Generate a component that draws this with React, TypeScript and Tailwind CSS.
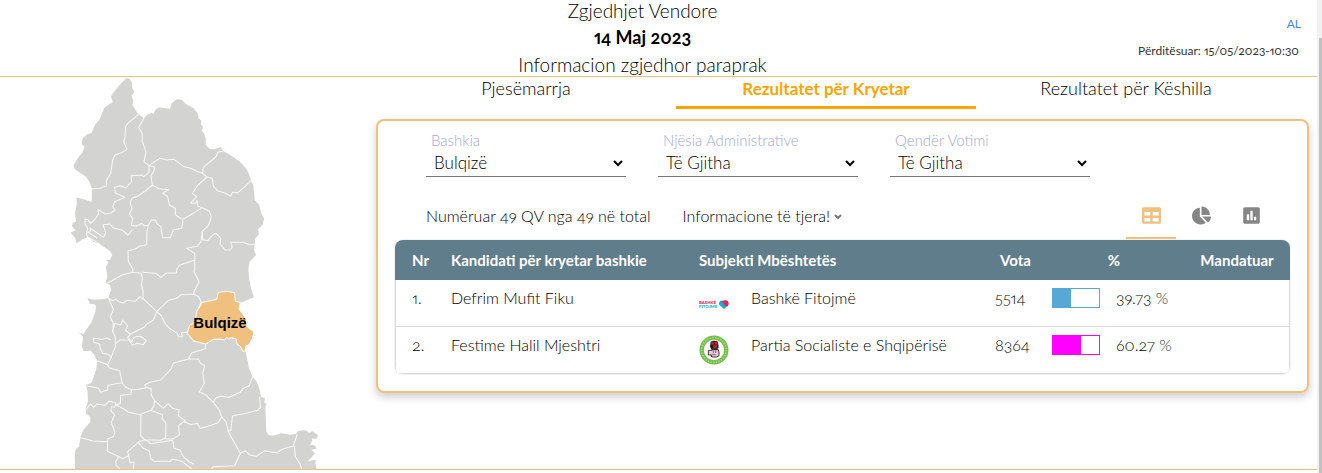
import React, { useState } from "react";
import { FaTable, FaChartPie, FaPoll } from "react-icons/fa";

const outline =
  "M200 24L209 27L215 36L217 55L223 66L214 78L220 92L217 105L225 118L235 132L252 144L262 134L274 129L281 131L286 119L298 112L315 115L330 117L335 100L350 88L365 89L378 102L400 114L412 128L416 145L424 152L422 163L430 170L424 182L432 190L437 205L437 224L448 236L459 238L468 236L482 232L490 243L515 258L540 275L560 298L568 315L573 332L580 345L583 375L584 390L598 405L602 425L612 447L608 465L594 478L597 493L586 505L584 523L582 540L588 555L568 577L565 600L568 630L573 655L582 682L540 699L537 718L560 748L563 770L582 785L575 810L555 830L556 843L562 870L567 895L578 920L590 935L598 955L603 980L615 985L613 998L620 1002L616 1010L619 1085L626 1095L640 1097L664 1090L690 1094L708 1092L715 1083L735 1080L748 1088L757 1083L775 1097L768 1107L755 1105L757 1113L750 1125L765 1126L770 1136L754 1139L765 1150L753 1164L741 1176L762 1169L768 1172L766 1181L770 1197H45L44 1150L48 1137L57 1130L62 1100L70 1080L91 1055L91 1042L78 1030L77 1014L84 995L82 960L78 945L95 938L108 900L112 875L103 855L93 842L70 843L66 830L69 800L55 787L70 793L80 778L95 755L106 725L108 707L102 702L90 702L82 684L100 689L125 688L145 685L153 660L150 645L137 638L142 620L138 590L145 577L138 571L150 570L157 555L148 541L137 535L120 522L100 515L85 500L68 508L50 520L45 503L32 488L47 480L36 470L38 458L48 455L45 430L50 405L50 382L95 395L96 357L88 335L78 320L62 310L45 298L40 288L55 262L66 250L74 230L65 222L68 205L82 193L95 188L105 165L120 146L133 113L158 96L153 78L168 58L185 38Z";

const borders = [
  "M235 132L226 142L205 158L197 170L195 202L191 216L201 238L185 248L165 255L158 270L152 310L140 330L139 348L120 355L96 357",
  "M252 144L236 172L246 190L247 215L258 245L252 275L267 287L284 275L300 265L320 270L342 268L372 290L390 294L410 304L428 310L441 321L413 346L397 371L410 380L391 400L407 400L411 391L413 408L427 413",
  "M490 243L474 247L467 261L446 279L430 292L428 310",
  "M441 321L457 325L460 348L472 362L495 369L512 379L518 366L532 369L555 350L573 332",
  "M267 287L267 307L251 320L245 315L214 317L214 336L197 354L181 347L164 352L166 369L195 382L164 395L158 410L165 420L153 429L135 432L114 419L116 432L103 450L92 460L83 449L75 447L75 462L83 474L79 491L92 482L90 474L131 502L137 488L129 464L149 462L160 474L186 480L204 495L217 479",
  "M267 287L283 290L283 300L273 318L277 345L297 356L326 359L308 369L323 380L328 405L346 415L347 435L365 447",
  "M277 345L260 360L236 377L216 385L210 400L216 416L208 431L218 446L214 466L229 469L245 460L253 468L265 466L274 450L287 450L290 460L302 469L308 503L331 503L340 480L365 474L369 448L400 430L427 413L448 424L454 440L446 466L427 485L423 515L412 529L380 535L404 550L405 570L358 586L350 600L349 609L319 609L303 622L288 610L247 607",
  "M427 485L428 509L443 512L458 495L468 490L482 505L480 522L496 540L510 540L517 531L512 517L550 517L568 524L584 523",
  "M265 466L261 485L260 524L238 529L225 537L204 543L205 575L218 596L218 607L186 615L165 627L142 640",
  "M79 491L83 501L106 514L119 523M83 486L112 504",
  "M404 570L404 600L402 605L417 635L402 665L402 673L416 680L424 697L411 722L408 755L382 785L400 812L437 822L436 836L395 849L385 867",
  "M218 607L243 610L247 622L244 645L249 660L249 685L290 725L325 691L350 685L364 674L402 673",
  "M145 685L158 692L167 688L177 695L190 699L200 691L225 694L240 680L249 688",
  "M145 685L160 718L151 740L160 760L158 785L166 800L166 830L153 863L143 884L112 872",
  "M290 725L280 750L259 763L255 770L211 793L196 780L203 768L188 750L182 765L165 760L158 785",
  "M290 725L303 736L317 763L327 774L352 790L356 800L366 800L365 788L382 787",
  "M153 810L140 804L126 808L101 805L101 817L119 822L120 833L128 850L145 853L155 864",
  "M211 793L203 802L215 815L222 802L240 798L259 812L250 824L232 820L217 826L207 810L180 810L168 820",
  "M143 884L148 894L179 902L186 938L196 951L214 959L213 973L182 976L181 1000L169 1006",
  "M186 938L144 946L143 960L122 966L115 954L81 948",
  "M214 959L235 958L260 953L254 945L270 937L302 930L333 897L340 880L360 874L385 867L415 867L421 880L434 887L428 910L433 940L418 965L439 976L460 997L478 1020L485 1041L474 1058L440 1070L420 1075L412 1060L393 1064L374 1056L376 1050",
  "M260 953L273 955L274 975L284 992L281 1010L272 1021L243 1033L242 1096L253 1109L302 1111L317 1104L318 1060L306 1045L308 1034L272 1021",
  "M284 992L310 1015L324 1001L338 1015L357 1019L356 1039L376 1051L356 1066L358 1095L338 1107L317 1107",
  "M78 1018L92 1002L101 1012L110 1002L135 1006L148 993L165 998L169 1004L162 1012L155 1010L152 1021L164 1035L154 1058L165 1087L160 1100L143 1106L143 1115L100 1113L62 1103",
  "M169 1004L190 1016L204 1026L242 1034",
  "M143 1115L142 1144L177 1160L167 1175L169 1187L180 1197M177 1160L188 1166L206 1157L203 1145L235 1117L253 1109L267 1115L270 1121L338 1111L342 1135L360 1140L370 1160L388 1176L402 1183",
  "M206 1157L210 1178L222 1175L220 1197M235 1117L248 1133L268 1144L272 1166L283 1174L331 1174L337 1167L366 1174L395 1197",
  "M460 997L467 985L480 979L508 982L540 967L550 955L567 948L578 920",
  "M485 1041L498 1055L505 1085L512 1081L518 1037L560 1030L593 1021L601 1012L599 980",
  "M505 1085L517 1107L541 1150L524 1187L460 1190L455 1197",
  "M541 1150L555 1142L570 1155L588 1159L615 1142L631 1145L650 1148L668 1137L700 1128L712 1092M703 1128L706 1160L719 1180L725 1197",
  "M437 822L460 806L494 807L500 800L512 803L528 805",
];

const bulqize =
  "M475 667L500 664L524 668L526 694L541 697L537 717L559 748L561 770L582 786L577 805L568 823L557 828L556 843L548 844L541 828L531 823L528 806L512 803L507 809L500 801L494 810L480 807L460 808L437 822L400 812L382 790L389 765L405 757L410 724L423 706L424 698L470 688Z";

function DistrictMap() {
  return (
    <svg
      viewBox="0 21 810 1176"
      className="ml-[60px] block w-[270px]"
      role="img"
      aria-label="Bulqizë"
    >
      <path d={outline} fill="#d3d3d1" />
      {borders.map((d) => (
        <path
          key={d}
          d={d}
          fill="none"
          stroke="#f7f7f6"
          strokeWidth="3.2"
          strokeLinejoin="round"
        />
      ))}
      <path d={bulqize} fill="#efc07e" stroke="#fff" strokeWidth="3" />
      <text
        x="480"
        y="774"
        textAnchor="middle"
        fontSize="45"
        fontWeight="700"
        fontFamily="'Liberation Sans', Arial, sans-serif"
      >
        Bulqizë
      </text>
    </svg>
  );
}

function BashkeLogo() {
  return (
    <svg viewBox="0 0 90 30" className="mt-1 w-[30px] shrink-0" aria-hidden="true">
      <text x="0" y="12" fontSize="13" fontWeight="900" fill="#e8264a" fontFamily="Lato, sans-serif">
        BASHKË
      </text>
      <text x="0" y="24" fontSize="13" fontWeight="900" fill="#26a9e0" fontFamily="Lato, sans-serif">
        FITOJMË
      </text>
      <path d="M75 27L61 15Q58 4 66 2Q71 1 75 5L88 16Z" fill="#26a3dd" />
      <path d="M68 5Q78 -2 86 3Q92 9 86 19L79 18L74 10Z" fill="#e8264a" />
    </svg>
  );
}

function SocialistLogo() {
  return (
    <svg viewBox="0 0 90 90" className="w-[30px] shrink-0" aria-hidden="true">
      <circle cx="45" cy="45" r="37" fill="#fff" stroke="#74bf4b" strokeWidth="13" />
      <circle
        cx="45"
        cy="45"
        r="37"
        fill="none"
        stroke="#a5d68a"
        strokeWidth="5"
        strokeDasharray="4 4"
      />
      <path d="M35 20Q45 14 57 20L59 38L50 45H39L33 36Z" fill="#26141a" />
      <path d="M37 21h9v8h-9zM48 20h8v9h-8zM42 31h12v7h-12z" fill="#c41f35" />
      <path d="M40 39H56V45H40Z" fill="#234d28" />
      <path d="M28 46H38V44H58L60 52V62L53 66H38L37 60H28Z" fill="#edc3d8" stroke="#21161c" strokeWidth="2.5" />
      <path d="M43 46V54M50 46V54M38 59H50" stroke="#21161c" strokeWidth="1.5" />
    </svg>
  );
}

const tabs = ["Pjesëmarrja", "Rezultatet për Kryetar", "Rezultatet për Këshilla"];

const filters = [
  { id: "bashkia", label: "Bashkia", value: "Bulqizë" },
  { id: "njesia", label: "Njësia Administrative", value: "Të Gjitha" },
  { id: "qender", label: "Qendër Votimi", value: "Të Gjitha" },
];

const views = [
  { name: "Tabela", Icon: FaTable },
  { name: "Grafiku rrethor", Icon: FaChartPie },
  { name: "Grafiku me shtylla", Icon: FaPoll },
];

const rows = [
  {
    nr: "1.",
    name: "Defrim Mufit Fiku",
    party: "Bashkë Fitojmë",
    Logo: BashkeLogo,
    votes: "5514",
    pct: "39.73",
    frame: "border-[#56a8d5]",
    fill: "bg-[#56a8d5]",
  },
  {
    nr: "2.",
    name: "Festime Halil Mjeshtri",
    party: "Partia Socialiste e Shqipërisë",
    Logo: SocialistLogo,
    votes: "8364",
    pct: "60.27",
    frame: "border-[#ff00ff]",
    fill: "bg-[#ff00ff]",
  },
];

export default function App() {
  const [tab, setTab] = useState(1);
  const [view, setView] = useState(0);

  return (
    <div className="flex min-h-screen bg-white font-['Lato','Open_Sans',sans-serif] font-light text-black oldstyle-nums proportional-nums">
      <div className="min-w-0 flex-1">
        <header className="grid grid-cols-[1fr_auto_1fr] border-b border-[#efc07e] pr-4">
          <div />
          <div className="-mt-[3px] mr-4 -mb-0.5 text-center text-[19px] leading-[27px]">
            <p>Zgjedhjet Vendore</p>
            <p className="text-[18px] font-bold">14 Maj 2023</p>
            <p>Informacion zgjedhor paraprak</p>
          </div>
          <div className="flex flex-col items-end gap-2 pt-3.5 text-[12px] leading-5">
            <a href="#al" className="font-normal text-[#4a86f0]">
              AL
            </a>
            <p className="-mt-px pr-0.5 font-normal text-[#333]">Përditësuar: 15/05/2023-10:30</p>
          </div>
        </header>

        <main className="flex border-b border-[#efc07e]">
          <div className="w-[376px] shrink-0">
            <DistrictMap />
          </div>

          <section className="min-w-0 flex-1 pr-2">
            <nav className="flex">
              {tabs.map((name, i) => (
                <button
                  key={name}
                  type="button"
                  onClick={() => setTab(i)}
                  className={
                    i === tab
                      ? "w-[300px] border-b-3 border-[#ffa500] pb-1.5 text-[17px] leading-[23px] font-bold text-[#ffa500]"
                      : "w-[300px] border-b-3 border-transparent pb-1.5 text-[18px] leading-[23px]"
                  }
                >
                  {name}
                </button>
              ))}
            </nav>

            <div className="mt-2.5 rounded-lg border-2 border-[#efc07e] px-[17px] pt-2.5 pb-[17px] shadow-[0_4px_8px_rgba(0,0,0,0.2)]">
              <div className="flex gap-8 px-[31px]">
                {filters.map((f) => (
                  <div key={f.id} className="flex w-[200px] flex-col">
                    <label htmlFor={f.id} className="pl-[5px] text-[15px] leading-[18px] text-[#a3a9d6]">
                      {f.label}
                    </label>
                    <select
                      id={f.id}
                      className="h-7 border-b border-[#767676] bg-transparent px-1 text-[17px] font-light"
                    >
                      <option>{f.value}</option>
                    </select>
                  </div>
                ))}
              </div>

              <div className="mt-4 flex items-center pr-[14px] pl-[31px]">
                <p className="text-[16px]">Numëruar 49 QV nga 49 në total</p>
                <button type="button" className="ml-8 flex items-center gap-1 text-[16px]">
                  Informacione të tjera!
                  <svg viewBox="0 0 8 6" className="mt-0.5 w-2" fill="none" stroke="#777" strokeWidth="2" aria-hidden="true">
                    <path d="M1 1L4 4L7 1" />
                  </svg>
                </button>
                <div className="ml-auto flex">
                  {views.map(({ name, Icon }, i) => (
                    <button
                      key={name}
                      type="button"
                      aria-label={name}
                      onClick={() => setView(i)}
                      className={
                        i === view
                          ? "flex h-[46px] w-[50px] items-center justify-center border-b-2 border-[#efc07e] text-[#efc07e]"
                          : "flex h-[46px] w-[50px] items-center justify-center border-b-2 border-transparent text-[#868686]"
                      }
                    >
                      <Icon size={19} />
                    </button>
                  ))}
                </div>
              </div>

              <div className="mt-px overflow-hidden rounded-lg shadow-[0_0_2px_rgba(0,0,0,0.2)]">
                <table className="w-full table-fixed border-separate border-spacing-0 text-left text-[16px] leading-5">
                  <colgroup>
                    <col className="w-12" />
                    <col className="w-[248px]" />
                    <col />
                    <col className="w-[57px]" />
                    <col className="w-[140px]" />
                    <col className="w-[106px]" />
                  </colgroup>
                  <thead className="bg-[#607d8b] text-[15px] text-white">
                    <tr className="h-10">
                      <th className="pl-[17px] font-bold">Nr</th>
                      <th className="pl-2 font-bold">Kandidati për kryetar bashkie</th>
                      <th className="pl-2 font-bold">Subjekti Mbështetës</th>
                      <th className="text-center font-bold">Vota</th>
                      <th className="text-center font-bold">%</th>
                      <th className="text-center font-bold">Mandatuar</th>
                    </tr>
                  </thead>
                  <tbody>
                    {rows.map((r) => (
                      <tr key={r.nr} className="align-top">
                        <td className="border-b border-l border-[#dadada] pt-2 pl-4">{r.nr}</td>
                        <td className="border-b border-[#dadada] pt-2 pl-2">{r.name}</td>
                        <td className="border-b border-[#dadada] pl-2">
                          <div className="flex h-[46px] gap-[22px]">
                            <span className="flex items-center">
                              <r.Logo />
                            </span>
                            <span className="pt-2">{r.party}</span>
                          </div>
                        </td>
                        <td className="border-b border-[#dadada] pt-2 pl-2">{r.votes}</td>
                        <td className="border-b border-[#dadada] pt-2 pl-2">
                          <div className="flex gap-4">
                            <span className={`h-5 w-12 border ${r.frame}`}>
                              <span className={`block h-full ${r.fill}`} style={{ width: `${r.pct}%` }} />
                            </span>
                            <span>
                              {r.pct} <span className="text-[#333]">%</span>
                            </span>
                          </div>
                        </td>
                        <td className="border-r border-b border-[#dadada]" />
                      </tr>
                    ))}
                  </tbody>
                </table>
              </div>
            </div>
          </section>
        </main>
      </div>

      <div className="w-[5px] shrink-0 bg-[#f1f1f1] pt-[38px] pl-0.5" aria-hidden="true">
        <div className="h-full bg-[#c1c1c1]" />
      </div>
    </div>
  );
}
